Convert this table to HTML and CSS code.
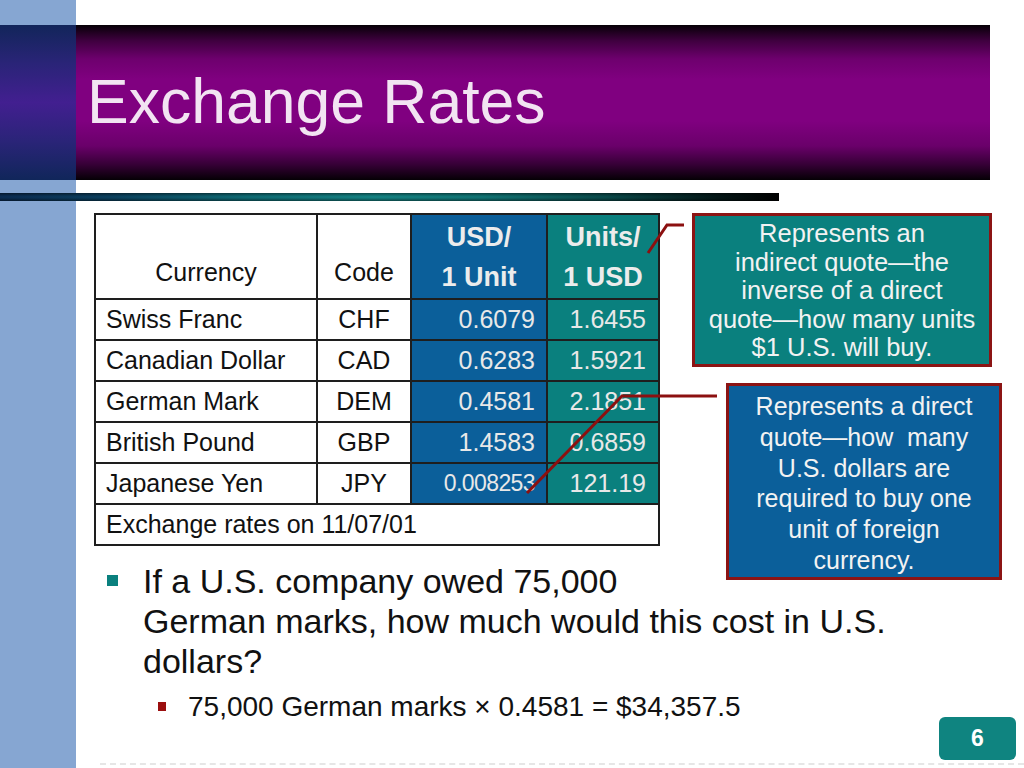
FILE: index.html
```html
<!DOCTYPE html>
<html>
<head>
<meta charset="utf-8">
<title>Exchange Rates</title>
<link rel="stylesheet" href="styles.css">
</head>
<body>
<div class="slide">
  <header class="title-band">
    <div class="title-side"></div>
    <div class="title-bar"><h1>Exchange Rates</h1></div>
  </header>
  <div class="rule"></div>

  <section class="main">
    <table class="rates">
      <colgroup>
        <col class="w-cur"><col class="w-code"><col class="w-usd"><col class="w-units">
      </colgroup>
      <thead>
        <tr>
          <th class="h-plain">Currency</th>
          <th class="h-plain h-center">Code</th>
          <th class="h-usd">USD/<br>1 Unit</th>
          <th class="h-units">Units/<br>1 USD</th>
        </tr>
      </thead>
      <tbody>
        <tr><td class="cur">Swiss Franc</td><td class="code">CHF</td><td class="usd">0.6079</td><td class="units">1.6455</td></tr>
        <tr><td class="cur">Canadian Dollar</td><td class="code">CAD</td><td class="usd">0.6283</td><td class="units">1.5921</td></tr>
        <tr><td class="cur">German Mark</td><td class="code">DEM</td><td class="usd">0.4581</td><td class="units">2.1851</td></tr>
        <tr><td class="cur">British Pound</td><td class="code">GBP</td><td class="usd">1.4583</td><td class="units">0.6859</td></tr>
        <tr><td class="cur">Japanese Yen</td><td class="code">JPY</td><td class="usd usd-small">0.008253</td><td class="units">121.19</td></tr>
        <tr><td class="note" colspan="4">Exchange rates on 11/07/01</td></tr>
      </tbody>
    </table>

    <div class="callouts">
      <div class="callout callout-teal">Represents an<br>indirect quote—the<br>inverse of a direct<br>quote—how many units<br>$1 U.S. will buy.</div>
      <div class="callout callout-blue">Represents a direct<br>quote—how&nbsp; many<br>U.S. dollars are<br>required to buy one<br>unit of foreign<br>currency.</div>
    </div>
  </section>

  <ul class="bullets">
    <li class="bullet">
      <span class="sq"></span>
      <div class="bullet-body">
        <p class="bullet-text">If a U.S. company owed 75,000<br>German marks, how much would this cost in U.S.<br>dollars?</p>
        <ul class="sub">
          <li class="sub-bullet"><span class="sq-sub"></span><span>75,000 German marks × 0.4581 = $34,357.5</span></li>
        </ul>
      </div>
    </li>
  </ul>

  <svg class="connectors" viewBox="0 0 1024 768" width="1024" height="768">
    <polyline points="648,253 667,225 684,225" />
    <polyline points="527,493 622,396 717,396" />
  </svg>

  <div class="footer-rule"></div>
  <div class="page-num">6</div>
</div>
</body>
</html>
```

FILE: styles.css
```css
html, body {
  margin: 0;
  padding: 0;
  background: #ffffff;
}

.slide {
  position: relative;
  width: 1024px;
  height: 768px;
  overflow: hidden;
  box-sizing: border-box;
  padding-top: 25px;
  background: linear-gradient(to right, #86a6d2 0, #86a6d2 76px, #ffffff 76px);
  font-family: "Liberation Sans", Arial, Helvetica, sans-serif;
  color: #111111;
}

/* ---------- title ---------- */
.title-band {
  display: flex;
  height: 155px;
}

.title-side {
  width: 76px;
  flex-shrink: 0;
  background: linear-gradient(to bottom, #12255a 0%, #2a2478 25%, #421f90 50%, #2a2478 75%, #10265a 100%);
}

.title-bar {
  width: 914px;
  display: flex;
  align-items: center;
  padding-left: 11px;
  box-sizing: border-box;
  background: linear-gradient(to bottom, #060006 0%, #3e003e 10%, #6e006e 22%, #800080 35%, #800080 62%, #6a006a 78%, #360036 90%, #050005 100%);
}

.title-bar h1 {
  margin: 0;
  font-size: 62.5px;
  font-weight: normal;
  line-height: 1;
  color: #f2e4f2;
  padding-bottom: 2px;
}

.rule {
  width: 779px;
  height: 8px;
  margin-top: 13px;
  background:
    linear-gradient(to bottom, rgba(0,0,0,0.45) 0%, rgba(0,0,0,0) 40%, rgba(0,0,0,0) 60%, rgba(0,0,0,0.45) 100%),
    linear-gradient(to right, #0a2a50 0%, #0b3f5c 14%, #0f6a72 32%, #148080 48%, #117272 62%, #0a4848 78%, #031616 92%, #000000 100%);
}

/* ---------- main row ---------- */
.main {
  display: flex;
  align-items: flex-start;
  margin-top: 12px;
  padding-left: 94px;
}

.rates {
  border-collapse: collapse;
  table-layout: fixed;
  width: 564px;
  font-size: 25px;
  border: 2px solid #1e1e1e;
}

.w-cur { width: 222px; }
.w-code { width: 94px; }
.w-usd { width: 136px; }
.w-units { width: 112px; }

.rates th,
.rates td {
  border: 2px solid #1e1e1e;
  padding: 0 11px;
  white-space: nowrap;
}

.rates thead tr { height: 85px; }
.rates tbody tr { height: 41px; }

.h-plain {
  font-weight: normal;
  vertical-align: bottom;
  padding-bottom: 11px !important;
  line-height: 30px;
  color: #111111;
}

.h-center { text-align: center; }

.h-usd,
.h-units {
  font-size: 27px;
  font-weight: bold;
  line-height: 40px;
  color: #ececec;
  text-align: center;
  vertical-align: middle;
}

.h-usd { background: #0b5f9a; }
.h-units { background: #0a807e; }

.cur { text-align: left; padding-left: 10px !important; }
.code { text-align: center; }

.usd,
.units {
  text-align: right;
  color: #e8e8e8;
}

.usd { background: #0b5f9a; }
.units { background: #0a807e; padding-right: 12px !important; }

.rates td.usd-small {
  font-size: 23px;
  letter-spacing: -0.6px;
  padding-left: 2px;
}

.note {
  text-align: left;
  padding-left: 10px !important;
}

/* ---------- callouts ---------- */
.callouts {
  display: flex;
  flex-direction: column;
  align-items: flex-start;
  margin-left: 32px;
  margin-bottom: -35px;
}

.callout {
  box-sizing: border-box;
  border: 3px solid #8c1414;
  color: #f2f2f2;
  text-align: center;
  font-size: 25px;
}

.callout-teal {
  width: 300px;
  height: 154px;
  padding-top: 3px;
  line-height: 28.5px;
  font-size: 25.5px;
  background: #0a807e;
}

.callout-blue {
  width: 276px;
  height: 197px;
  margin-top: 16px;
  margin-left: 34px;
  padding-top: 5px;
  line-height: 30.8px;
  background: #0b5f9a;
}

/* ---------- bullets ---------- */
.bullets {
  list-style: none;
  margin: 15px 0 0 0;
  padding: 0 0 0 107px;
}

.bullet {
  display: flex;
  align-items: flex-start;
}

.sq {
  width: 11px;
  height: 11px;
  flex-shrink: 0;
  margin-top: 14px;
  margin-right: 25px;
  background: #0a807e;
}

.bullet-text {
  margin: 0;
  font-size: 34px;
  line-height: 40px;
  color: #111111;
}

.sub {
  list-style: none;
  margin: 10px 0 0 0;
  padding: 0 0 0 15px;
}

.sub-bullet {
  display: flex;
  align-items: flex-start;
  font-size: 28px;
  line-height: 32px;
}

.sq-sub {
  width: 8px;
  height: 9px;
  flex-shrink: 0;
  margin-top: 11px;
  margin-right: 22px;
  background: #9b0f0f;
}

/* ---------- overlays ---------- */
.connectors {
  position: absolute;
  left: 0;
  top: 0;
  pointer-events: none;
}

.connectors polyline {
  fill: none;
  stroke: #8c1010;
  stroke-width: 3;
  stroke-linejoin: miter;
}

.footer-rule {
  position: absolute;
  left: 100px;
  right: 0;
  bottom: 3px;
  border-top: 2px dashed #e6e6e6;
}

.page-num {
  position: absolute;
  right: 8px;
  bottom: 8px;
  width: 77px;
  height: 43px;
  border-radius: 6px;
  background: #0f8480;
  color: #ffffff;
  font-size: 23px;
  font-weight: bold;
  display: flex;
  align-items: center;
  justify-content: center;
}
```
